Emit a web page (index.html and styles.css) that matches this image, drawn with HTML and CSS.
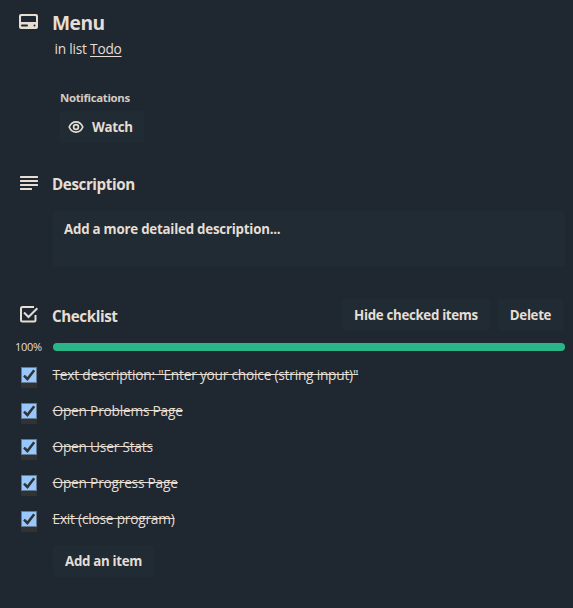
FILE: index.html
```html
<!DOCTYPE html>
<html lang="en">
<head>
<meta charset="utf-8">
<title>Menu</title>
<link rel="stylesheet" href="styles.css">
</head>
<body>
<main class="card">
  <header class="card-head">
    <svg class="icon" width="20" height="16" viewBox="0 0 20 16"><path fill="currentColor" fill-rule="evenodd" d="M2 0h15A2 2 0 0 1 19 2v11a2 2 0 0 1-2 2H2a2 2 0 0 1-2-2V2A2 2 0 0 1 2 0ZM3 2a1 1 0 0 0-1 1v5h15V3a1 1 0 0 0-1-1ZM3 10.500a1 1 0 0 0 0 2h5a1 1 0 0 0 0-2ZM15.500 10.500a1 1 0 1 0 0 2 1 1 0 0 0 0-2Z"/></svg>
    <h1 class="card-title">Menu</h1>
  </header>
  <p class="location">in list <a class="list-link">Todo</a></p>

  <section class="notifications">
    <h3 class="label">Notifications</h3>
    <button class="button watch">
      <svg width="16" height="14" viewBox="0 0 16 14" fill="none" stroke="currentColor"><path stroke-width="1.7" d="M1.200 7C2.600 3.700 4.700 1.900 8 1.900S13.400 3.700 14.800 7C13.400 10.300 11.300 12.100 8 12.100S2.600 10.300 1.200 7Z"/><circle cx="8" cy="7" r="2.400" stroke-width="1.7"/></svg>
      <span>Watch</span>
    </button>
  </section>

  <section>
    <div class="section-head description-head">
      <svg class="icon" width="20" height="16" viewBox="0 0 20 16" fill="currentColor"><rect x="1" y="1" width="18" height="2" rx=".5"/><rect x="1" y="5" width="18" height="2" rx=".5"/><rect x="1" y="9" width="18" height="2" rx=".5"/><rect x="1" y="13" width="12" height="2" rx=".5"/></svg>
      <h2 class="section-title">Description</h2>
    </div>
    <div class="description">Add a more detailed description...</div>
  </section>

  <section>
    <div class="section-head checklist-head">
      <svg class="icon checklist-icon" width="20" height="20" viewBox="0 0 20 20" fill="none" stroke="currentColor" stroke-width="2"><path d="M15 3H3.500A1.500 1.500 0 0 0 2 4.500V16a1.500 1.500 0 0 0 1.500 1.500H15a1.500 1.500 0 0 0 1.500-1.500v-5"/><path d="M5 8.500 9.500 13 18.300 4.200"/></svg>
      <h2 class="section-title checklist-title">Checklist</h2>
      <button class="button">Hide checked items</button>
      <button class="button delete">Delete</button>
    </div>
    <div class="progress"><span class="percent">100%</span><div class="track"></div></div>
    <ul class="items">
      <li class="item"><span class="check"><svg width="16" height="16" viewBox="0 0 16 16"><path d="m3 8.600 3.400 3.400 6.800-8.800"/></svg></span><span class="item-text">Text description: "Enter your choice (string input)"</span></li>
      <li class="item"><span class="check"><svg width="16" height="16" viewBox="0 0 16 16"><path d="m3 8.600 3.400 3.400 6.800-8.800"/></svg></span><span class="item-text">Open Problems Page</span></li>
      <li class="item"><span class="check"><svg width="16" height="16" viewBox="0 0 16 16"><path d="m3 8.600 3.400 3.400 6.800-8.800"/></svg></span><span class="item-text">Open User Stats</span></li>
      <li class="item"><span class="check"><svg width="16" height="16" viewBox="0 0 16 16"><path d="m3 8.600 3.400 3.400 6.800-8.800"/></svg></span><span class="item-text">Open Progress Page</span></li>
      <li class="item"><span class="check"><svg width="16" height="16" viewBox="0 0 16 16"><path d="m3 8.600 3.400 3.400 6.800-8.800"/></svg></span><span class="item-text">Exit (close program)</span></li>
    </ul>
    <button class="button add">Add an item</button>
  </section>
</main>
</body>
</html>
```
FILE: styles.css
```css
* { box-sizing: border-box; }
body {
  margin: 0;
  background: #1f2730;
  color: #e6ddd3;
  font: 13.7px/20px "Open Sans", "Noto Sans", sans-serif;
  letter-spacing: -.21px;
}
h1, h2, h3, p, ul { margin: 0; padding: 0; }
ul { list-style: none; }
svg { display: block; flex: none; }
.card { width: 573px; height: 608px; padding: 10px 8px 0 19px; overflow: hidden; }
.card-head, .section-head { display: grid; grid-template-columns: 20px 1fr; column-gap: 13px; }
.card-head { height: 28px; }
.card-head .icon { margin-top: 4px; }
.card-title { font-size: 19.2px; line-height: 26px; font-weight: 700; letter-spacing: -.5px; }
.location { margin: 1px 0 0 35.5px; height: 20px; }
.list-link { text-decoration: underline; text-underline-offset: 2px; }
.notifications { margin: 29px 0 0 41px; height: 55px; }
.label { font-size: 11.4px; line-height: 20px; font-weight: 700; height: 23px; letter-spacing: -.32px; color: #d3cbc2; }
.button {
  display: block;
  height: 32px;
  padding: 0;
  border: 0;
  border-radius: 3px;
  background: #202b34;
  color: inherit;
  font: 700 13.3px/32px "Open Sans", "Noto Sans", sans-serif;
  letter-spacing: -.32px;
  text-align: center;
  white-space: nowrap;
}
.watch { display: flex; align-items: center; gap: 8px; width: 84px; padding-left: 8px; }
.description-head { height: 32px; margin-top: 24px; align-items: center; }
.section-title { font-size: 15.2px; line-height: 20px; padding-top: 1px; font-weight: 700; letter-spacing: -.42px; }
.description { margin: 12px 0 0 34px; height: 56px; padding: 8px 11px; border-radius: 3px; background: #202b34; font-size: 13.3px; font-weight: 700; letter-spacing: -.22px; }
.checklist-head { grid-template-columns: 20px 1fr 148px 73px; height: 32px; margin-top: 32px; padding-right: 2px; align-items: center; column-gap: 0; }
.checklist-icon { margin-top: -2px; }
.checklist-title { margin-left: 13px; }
.delete { margin-left: 8px; }
.progress { display: flex; align-items: center; margin: 6px 0 0 -4px; height: 20px; }
.percent { width: 38px; font-size: 11px; letter-spacing: -.25px; }
.track { flex: 1; height: 8px; border-radius: 4px; background: #2ab589; }
.items { margin-top: 8px; }
.item { display: flex; height: 36px; padding-left: 2px; }
.check { width: 16px; height: 21px; margin-top: 2px; background: #303234; }
.check svg { background: #97c7fb; border-radius: 0; outline: 1px solid #667b91; outline-offset: -1px; }
.check path { fill: none; stroke: #303234; stroke-width: 2.5; }
.item-text { margin-left: 15.5px; text-decoration: line-through; height: 20px; white-space: nowrap; }
.add { width: 101px; margin: 0 0 0 34px; }
```
